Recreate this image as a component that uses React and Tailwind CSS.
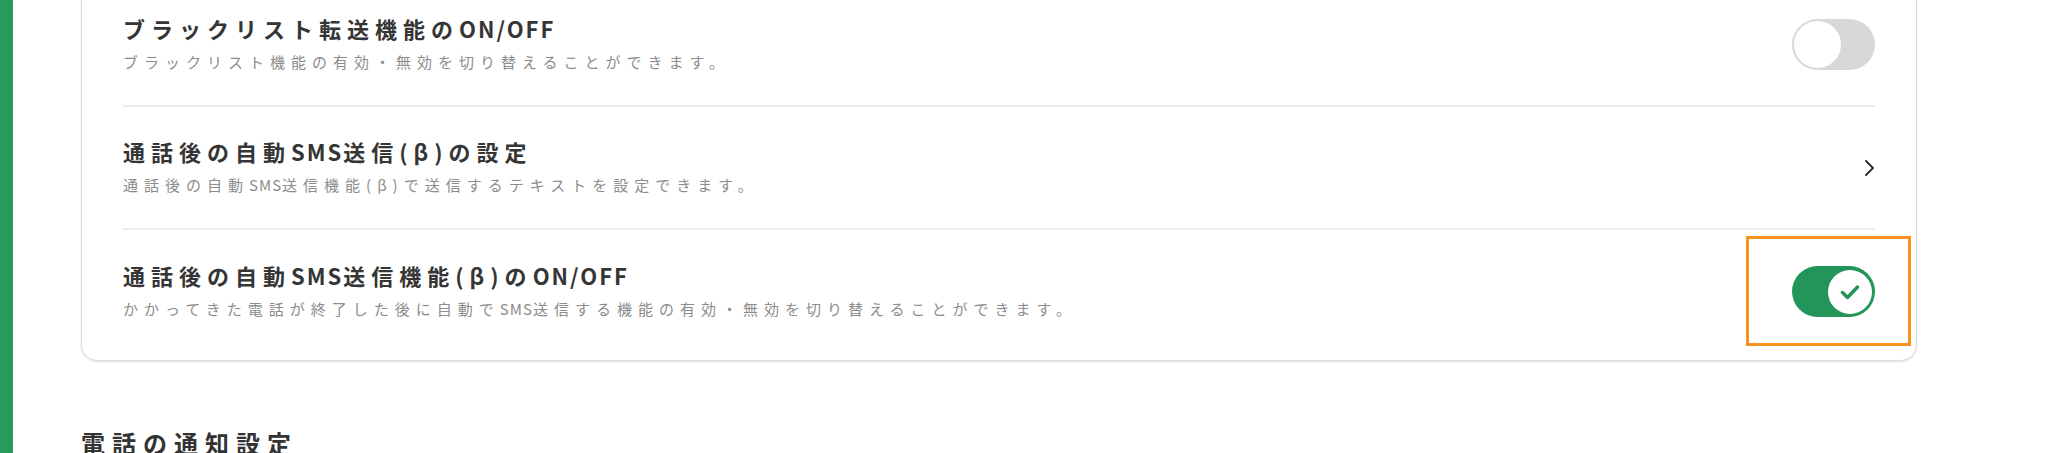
import React, { useState } from 'react';

const font = "font-['Noto_Sans_CJK_JP','Noto_Sans',sans-serif]";

// latin runs are spaced tighter than the japanese ones
const Spaced = ({ text, latin }) =>
  text.split(/([A-Za-z/]+)/).map((part, i) =>
    /^[A-Za-z/]+$/.test(part) ? (
      <span key={i} className={latin}>{part}</span>
    ) : (
      <span key={i}>{part}</span>
    )
  );

const Toggle = ({ on, onChange }) => {
  return (
    <button
      type="button"
      onClick={onChange}
      className={`relative flex h-[51px] w-[83px] shrink-0 items-center rounded-full p-[2px] ${on ? 'justify-end bg-[#23955a]' : 'justify-start bg-[#d7d9d9]'}`}
    >
      {on ? (
        <span className="mr-[1px] flex h-[44px] w-[44px] items-center justify-center rounded-full bg-white">
          <svg width="22" height="18" viewBox="0 0 22 18" fill="none">
            <path d="M3.5 9.5l5 5L18.5 4" stroke="#23955a" strokeWidth="3.5" strokeLinecap="round" strokeLinejoin="round" />
          </svg>
        </span>
      ) : (
        <span className="h-[47px] w-[47px] rounded-full bg-white" />
      )}
    </button>
  );
};

const Row = ({ title, desc, children, last }) => (
  <div className={`flex h-[123px] items-center justify-between ${last ? '' : 'border-b-2 border-[#ececec]'}`}>
    <div>
      <div className="mb-[8px] text-[22px] font-bold leading-[26px] tracking-[6px] text-[#353535]">
        <Spaced text={title} latin="tracking-[2px]" />
      </div>
      <div className="text-[15px] leading-[26px] tracking-[6px] text-[#8c8c8c]">
        <Spaced text={desc} latin="tracking-[1px]" />
      </div>
    </div>
    {children}
  </div>
);

const App = () => {
  const [blacklist, setBlacklist] = useState(false);
  const [autoSms, setAutoSms] = useState(true);

  return (
    <div className={`flex h-[453px] overflow-hidden bg-white ${font}`}>
      <div className="w-[13px] shrink-0 bg-[#289b5c]" />
      <div className="flex-1 pl-[68px] pr-[131px]">
        <div className="-mt-[17px] rounded-2xl border border-[#dedede] bg-white px-[41px] pb-[7px] shadow-[0_1px_2px_rgba(0,0,0,0.12)]">
          <Row
            title="ブラックリスト転送機能のON/OFF"
            desc="ブラックリスト機能の有効・無効を切り替えることができます。"
          >
            <Toggle on={blacklist} onChange={() => setBlacklist(!blacklist)} />
          </Row>
          <Row
            title="通話後の自動SMS送信(β)の設定"
            desc="通話後の自動SMS送信機能(β)で送信するテキストを設定できます。"
          >
            <svg width="12" height="18" viewBox="0 0 12 18" fill="none">
              <path d="M3 2l7 7-7 7" stroke="#333" strokeWidth="2" strokeLinecap="round" strokeLinejoin="round" />
            </svg>
          </Row>
          <Row
            title="通話後の自動SMS送信機能(β)のON/OFF"
            desc="かかってきた電話が終了した後に自動でSMS送信する機能の有効・無効を切り替えることができます。"
            last
          >
            <div className="relative">
              <Toggle on={autoSms} onChange={() => setAutoSms(!autoSms)} />
              <div className="pointer-events-none absolute -left-[46px] -top-[30px] h-[110px] w-[165px] border-[3px] border-[#f7921c]" />
            </div>
          </Row>
        </div>
        <h2 className="mt-[66px] text-[24px] font-bold leading-[32px] tracking-[7px] text-[#333]">電話の通知設定</h2>
      </div>
    </div>
  );
};

export default App;
